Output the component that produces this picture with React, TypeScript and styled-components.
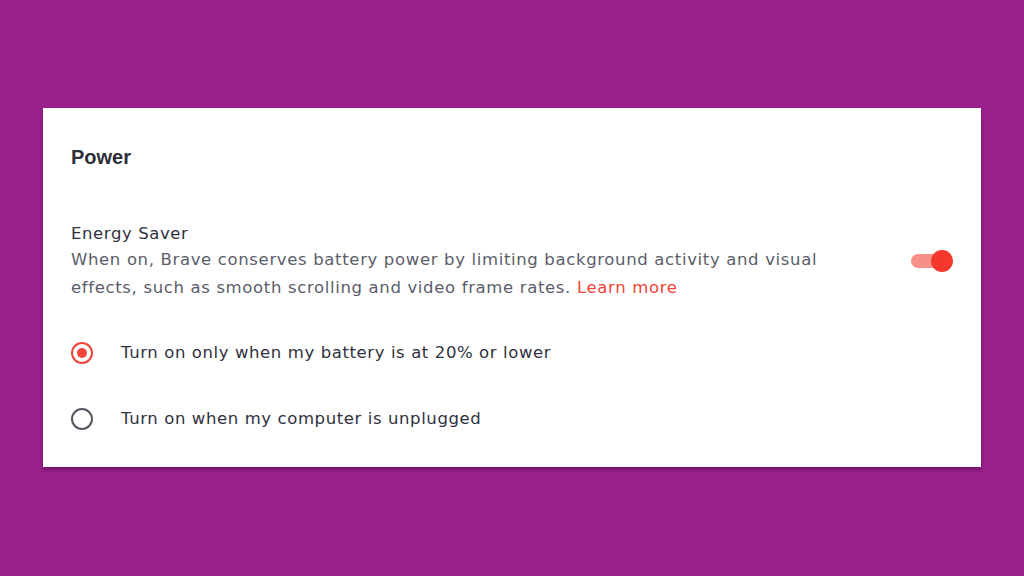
import React, { useState } from "react";
import styled, { createGlobalStyle } from "styled-components";

const GlobalStyle = createGlobalStyle`
  html, body {
    margin: 0;
    padding: 0;
    background: #9c208c;
  }
`;

const Page = styled.div`
  width: 1024px;
  height: 576px;
  box-sizing: border-box;
  padding: 108px 43px 0 43px;
  font-family: "DejaVu Sans", "Noto Sans", sans-serif;
`;

const Card = styled.section`
  background: #ffffff;
  height: 359px;
  box-sizing: border-box;
  padding: 36px 26px 0 28px;
  box-shadow: 0 3px 4px rgba(60, 10, 60, 0.45);
`;

const Title = styled.h2`
  margin: 0;
  font-family: "Liberation Sans", Arial, sans-serif;
  font-size: 20px;
  font-weight: 700;
  color: #2e2f38;
  line-height: 26px;
`;

const SettingRow = styled.div`
  display: flex;
  align-items: center;
  margin-top: 52px;
`;

const SettingText = styled.div`
  flex: 1;
`;

const Label = styled.div`
  font-size: 16.5px;
  letter-spacing: 0.6px;
  line-height: 24px;
  color: #2f3140;
`;

const Description = styled.div`
  font-size: 16.5px;
  letter-spacing: 0.65px;
  line-height: 28px;
  color: #5b5d6a;
  white-space: nowrap;
`;

const Link = styled.a`
  color: #f1443a;
  text-decoration: none;
`;

const Toggle = styled.button<{ on: boolean }>`
  position: relative;
  width: 46px;
  height: 24px;
  border: none;
  background: transparent;
  padding: 0;
  margin-top: -2px;
  cursor: pointer;

  &::before {
    content: "";
    position: absolute;
    left: 2px;
    right: 4px;
    top: 5px;
    height: 14px;
    border-radius: 7px;
    background: ${(p) => (p.on ? "#f79088" : "#c8c9d0")};
  }

  &::after {
    content: "";
    position: absolute;
    top: 1px;
    left: ${(p) => (p.on ? "22px" : "1px")};
    width: 22px;
    height: 22px;
    border-radius: 50%;
    background: ${(p) => (p.on ? "#f5382c" : "#ffffff")};
  }
`;

const RadioList = styled.div`
  display: flex;
  flex-direction: column;
  gap: 42px;
  margin-top: 39px;
`;

const RadioRow = styled.label`
  display: flex;
  align-items: center;
  gap: 28px;
  cursor: pointer;
`;

const RadioCircle = styled.span<{ checked: boolean }>`
  width: 22px;
  height: 22px;
  box-sizing: border-box;
  border-radius: 50%;
  border: 2px solid ${(p) => (p.checked ? "#f0443a" : "#55575f")};
  display: flex;
  align-items: center;
  justify-content: center;

  &::after {
    content: "";
    width: 10px;
    height: 10px;
    border-radius: 50%;
    background: ${(p) => (p.checked ? "#f0443a" : "transparent")};
  }
`;

const RadioText = styled.span`
  font-size: 16.5px;
  letter-spacing: 0.6px;
  line-height: 24px;
  color: #2f3140;
`;

const options = [
  "Turn on only when my battery is at 20% or lower",
  "Turn on when my computer is unplugged",
];

export default function App() {
  const [on, setOn] = useState(true);
  const [selected, setSelected] = useState(0);

  return (
    <Page>
      <GlobalStyle />
      <Card>
        <Title>Power</Title>
        <SettingRow>
          <SettingText>
            <Label>Energy Saver</Label>
            <Description>
              When on, Brave conserves battery power by limiting background activity and visual
              <br />
              effects, such as smooth scrolling and video frame rates.{" "}
              <Link href="#">Learn more</Link>
            </Description>
          </SettingText>
          <Toggle on={on} onClick={() => setOn(!on)} aria-label="Energy Saver" />
        </SettingRow>
        <RadioList>
          {options.map((o, i) => (
            <RadioRow key={o} onClick={() => setSelected(i)}>
              <RadioCircle checked={selected === i} />
              <RadioText>{o}</RadioText>
            </RadioRow>
          ))}
        </RadioList>
      </Card>
    </Page>
  );
}
